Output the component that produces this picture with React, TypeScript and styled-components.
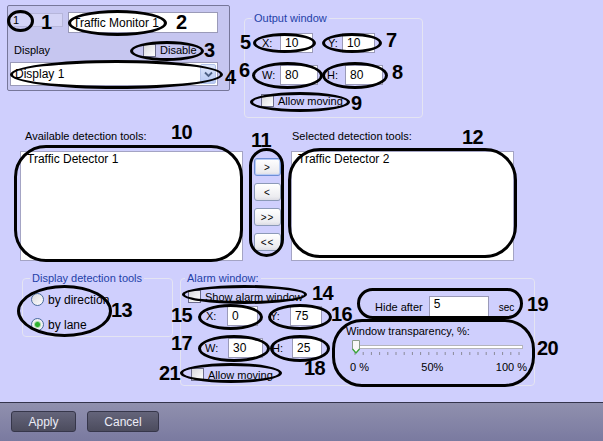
import React from "react";
import styled, { createGlobalStyle } from "styled-components";

const GlobalStyle = createGlobalStyle`
  html, body {
    margin: 0;
    padding: 0;
    background: #cfcffd;
  }
  body {
    font-family: "Liberation Sans", Arial, sans-serif;
    font-size: 11px;
    color: #000;
  }
`;

const Window = styled.div`
  position: relative;
  width: 603px;
  height: 441px;
  overflow: hidden;
  background: #cfcffd;
  display: flex;
  flex-direction: column;
`;

const Content = styled.div`
  height: 402px;
  display: flex;
  flex-direction: column;
`;

const TopRow = styled.div`
  display: flex;
  align-items: flex-start;
  padding-left: 7px;
`;

const ObjectPanel = styled.div`
  box-sizing: border-box;
  width: 223px;
  height: 86px;
  margin-top: 5px;
  padding: 6px 0 0 2px;
  border: 1px solid #77779a;
  border-radius: 2px;
  background: #c6c6f0;
  display: flex;
  flex-direction: column;
`;

const PanelRow = styled.div<{ $mt?: number; $h?: number }>`
  display: flex;
  align-items: center;
  margin-top: ${(p) => p.$mt ?? 0}px;
  height: ${(p) => p.$h ?? 21}px;
`;

const IdBox = styled.div`
  box-sizing: border-box;
  width: 53px;
  height: 14px;
  margin-top: 1px;
  align-self: flex-start;
  padding-left: 2px;
  line-height: 12px;
  border: 1px solid #b6b6da;
  background: #d4d4f6;
`;

const TextBox = styled.div<{ $w: number; $h?: number; $ml?: number }>`
  box-sizing: border-box;
  width: ${(p) => p.$w}px;
  height: ${(p) => p.$h ?? 20}px;
  margin-left: ${(p) => p.$ml ?? 0}px;
  flex: none;
  padding: 0 4px;
  display: flex;
  align-items: center;
  background: #fff;
  border: 1px solid #9a9ab8;
  font-size: 12px;
  white-space: nowrap;
`;

const PlainLabel = styled.span<{ $w?: number }>`
  display: inline-block;
  flex: none;
  width: ${(p) => (p.$w ? `${p.$w}px` : "auto")};
  white-space: nowrap;
  font-size: 11px;
`;

const CheckRow = styled.label<{ $pl?: number; $mt?: number }>`
  display: flex;
  align-items: center;
  gap: 4px;
  height: 13px;
  padding-left: ${(p) => p.$pl ?? 0}px;
  margin-top: ${(p) => p.$mt ?? 0}px;
  font-size: 11px;
  white-space: nowrap;
`;

const CheckBox = styled.span`
  box-sizing: border-box;
  width: 13px;
  height: 13px;
  flex: none;
  border: 1px solid #6c6c8c;
  background: linear-gradient(135deg, #d8d8dc 0%, #f4f4f6 70%, #ffffff 100%);
`;

const Select = styled.div`
  box-sizing: border-box;
  width: 208px;
  height: 24px;
  display: flex;
  align-items: center;
  justify-content: space-between;
  padding-left: 4px;
  background: #fff;
  border: 1px solid #9a9ab8;
  font-size: 12px;
`;

const SelectArrow = styled.span`
  box-sizing: border-box;
  width: 16px;
  height: 20px;
  margin-right: 1px;
  display: flex;
  align-items: center;
  justify-content: center;
  border: 1px solid #b4c4ea;
  border-radius: 2px;
  background: linear-gradient(#dfe8fc, #b6c8f4);
`;

const Group = styled.fieldset<{ $w: number; $h: number; $ml?: number; $mt?: number }>`
  box-sizing: border-box;
  width: ${(p) => p.$w}px;
  height: ${(p) => p.$h}px;
  margin: ${(p) => p.$mt ?? 0}px 0 0 ${(p) => p.$ml ?? 0}px;
  padding: 0;
  min-width: 0;
  border: 1px solid #e4e4f2;
  border-radius: 4px;
`;

const Legend = styled.legend<{ $ml: number }>`
  margin-left: ${(p) => p.$ml}px;
  padding: 0 2px;
  line-height: 12px;
  font-size: 11px;
  color: #1f3fa8;
`;

const FieldRow = styled.div<{ $pl: number; $mt: number }>`
  display: flex;
  align-items: center;
  padding-left: ${(p) => p.$pl}px;
  margin-top: ${(p) => p.$mt}px;
`;

const Lists = styled.div`
  display: grid;
  grid-template-columns: 223px 26px 223px;
  grid-template-rows: 13px 110px;
  column-gap: 11px;
  row-gap: 8px;
  margin-top: 12px;
  padding-left: 20px;
`;

const ListCaption = styled.div<{ $pl: number }>`
  padding-left: ${(p) => p.$pl}px;
  line-height: 13px;
  font-size: 11px;
  white-space: nowrap;
`;

const ListBox = styled.div`
  box-sizing: border-box;
  background: #fff;
  border: 1px solid #a4a4c4;
  padding: 0 6px;
  font-size: 12px;
  line-height: 14px;
`;

const MoveButtons = styled.div`
  display: flex;
  flex-direction: column;
  gap: 7px;
  padding-top: 7px;
`;

const MoveButton = styled.div<{ $focus?: boolean }>`
  box-sizing: border-box;
  width: 27px;
  height: 18px;
  display: flex;
  align-items: center;
  justify-content: center;
  border: 1px solid ${(p) => (p.$focus ? "#6e8ed6" : "#8c9ab8")};
  border-radius: 3px;
  background: linear-gradient(#ffffff, #ececf0 80%, #dcdce4);
  box-shadow: ${(p) => (p.$focus ? "inset 0 0 0 1px #b8ccf4" : "none")};
  font-size: 10px;
  letter-spacing: 1px;
`;

const BottomRow = styled.div`
  display: flex;
  align-items: flex-start;
  margin-top: 11px;
  padding-left: 22px;
  gap: 7px;
`;

const RadioRow = styled.label<{ $mt: number }>`
  display: flex;
  align-items: center;
  gap: 4px;
  height: 13px;
  margin-top: ${(p) => p.$mt}px;
  padding-left: 8px;
  font-size: 12px;
  white-space: nowrap;
`;

const Radio = styled.span<{ $checked?: boolean }>`
  box-sizing: border-box;
  width: 13px;
  height: 13px;
  flex: none;
  border-radius: 50%;
  border: 1px solid #4a6c9c;
  background: ${(p) =>
    p.$checked
      ? "radial-gradient(circle, #2fb02f 0, #2fb02f 2px, #a8dca8 3px, #f0f0f2 4px)"
      : "linear-gradient(135deg, #d8d8dc, #ffffff)"};
`;

const AlarmBody = styled.div`
  display: flex;
`;

const AlarmLeft = styled.div`
  width: 154px;
  display: flex;
  flex-direction: column;
  padding-top: 6px;
`;

const AlarmRight = styled.div`
  flex: 1;
  display: flex;
  flex-direction: column;
`;

const HideRow = styled.div`
  display: flex;
  align-items: center;
  margin-top: 12px;
  padding-left: 40px;
  gap: 6px;
  font-size: 11px;
`;

const Caption = styled.div<{ $pl: number; $mt: number }>`
  padding-left: ${(p) => p.$pl}px;
  margin-top: ${(p) => p.$mt}px;
  line-height: 13px;
  font-size: 11px;
  white-space: nowrap;
`;

const SliderWrap = styled.div`
  margin: 2px 0 0 16px;
  height: 16px;
`;

const ScaleRow = styled.div`
  display: flex;
  justify-content: space-between;
  width: 177px;
  margin: 5px 0 0 15px;
  font-size: 11px;
  line-height: 13px;
`;

const Footer = styled.div`
  box-sizing: border-box;
  height: 39px;
  border-top: 1px solid #34344c;
  background: linear-gradient(#9090ae, #7a7aa0);
  display: flex;
  align-items: flex-start;
  gap: 11px;
  padding: 8px 0 0 11px;
`;

const FooterButton = styled.div<{ $w: number }>`
  box-sizing: border-box;
  width: ${(p) => p.$w}px;
  height: 21px;
  display: flex;
  align-items: center;
  justify-content: center;
  border: 1px solid #36364a;
  border-radius: 3px;
  background: linear-gradient(#64647a, #4c4c5e);
  color: #ececf6;
  font-size: 12px;
`;

const Overlay = styled.div`
  position: absolute;
  inset: 0;
  pointer-events: none;
`;

const Ring = styled.div<{ $x: number; $y: number; $w: number; $h: number; $r?: number }>`
  position: absolute;
  box-sizing: border-box;
  left: ${(p) => p.$x}px;
  top: ${(p) => p.$y}px;
  width: ${(p) => p.$w}px;
  height: ${(p) => p.$h}px;
  border: 3px solid #000;
  border-radius: ${(p) => (p.$r ? `${p.$r}px` : "50%")};
`;

const Callout = styled.div<{ $x: number; $y: number }>`
  position: absolute;
  left: ${(p) => p.$x - 1}px;
  top: ${(p) => p.$y - 3}px;
  font-family: "Liberation Sans", Arial, sans-serif;
  font-weight: bold;
  font-size: 20px;
  line-height: 20px;
  letter-spacing: -0.5px;
  color: #000;
`;

const rings = [
  { x: 7, y: 10, w: 27, h: 22 },
  { x: 68, y: 10, w: 99, h: 26 },
  { x: 130, y: 41, w: 74, h: 20 },
  { x: 10, y: 60, w: 213, h: 29 },
  { x: 253, y: 33, w: 63, h: 20 },
  { x: 322, y: 33, w: 60, h: 20 },
  { x: 252, y: 62, w: 71, h: 27 },
  { x: 322, y: 62, w: 66, h: 27 },
  { x: 250, y: 92, w: 100, h: 20 },
  { x: 14, y: 145, w: 229, h: 117, r: 32 },
  { x: 249, y: 148, w: 35, h: 109, r: 18 },
  { x: 288, y: 148, w: 229, h: 110, r: 32 },
  { x: 17, y: 285, w: 95, h: 52 },
  { x: 182, y: 285, w: 125, h: 19 },
  { x: 198, y: 304, w: 65, h: 26 },
  { x: 268, y: 304, w: 64, h: 26 },
  { x: 198, y: 335, w: 72, h: 27 },
  { x: 270, y: 335, w: 60, h: 27 },
  { x: 180, y: 363, w: 102, h: 20 },
  { x: 357, y: 288, w: 166, h: 31, r: 16 },
  { x: 332, y: 319, w: 203, h: 68, r: 30 },
];

const callouts = [
  { n: "1", x: 42, y: 15 },
  { n: "2", x: 177, y: 15 },
  { n: "3", x: 205, y: 43 },
  { n: "4", x: 226, y: 70 },
  { n: "5", x: 241, y: 35 },
  { n: "6", x: 240, y: 63 },
  { n: "7", x: 387, y: 33 },
  { n: "8", x: 393, y: 65 },
  { n: "9", x: 352, y: 96 },
  { n: "10", x: 172, y: 125 },
  { n: "11", x: 252, y: 133 },
  { n: "12", x: 463, y: 130 },
  { n: "13", x: 112, y: 303 },
  { n: "14", x: 313, y: 286 },
  { n: "15", x: 172, y: 308 },
  { n: "16", x: 332, y: 307 },
  { n: "17", x: 172, y: 336 },
  { n: "18", x: 305, y: 361 },
  { n: "19", x: 528, y: 297 },
  { n: "20", x: 538, y: 341 },
  { n: "21", x: 160, y: 366 },
];

const ticks = Array.from({ length: 21 }, (_, i) => 4 + i * 8.2);

const Slider = () => (
  <svg width="174" height="16" viewBox="0 0 174 16">
    <rect x="1.5" y="5.5" width="170" height="3" fill="#fff" stroke="#b4b4bc" />
    {ticks.map((t) => (
      <line key={t} x1={t} x2={t} y1="12" y2="15" stroke="#8a8a98" strokeWidth="1" />
    ))}
    <path d="M1.5 0.5 H8.5 V9 L5 13 L1.5 9 Z" fill="#f8f8f8" stroke="#8a9a8a" />
    <path d="M1.5 9 L5 13 L8.5 9" fill="none" stroke="#3aa63a" strokeWidth="1.2" />
  </svg>
);

const ChevronDown = () => (
  <svg width="9" height="7" viewBox="0 0 9 7">
    <path d="M1 1.5 L4.5 5 L8 1.5" fill="none" stroke="#4d6185" strokeWidth="1.8" />
  </svg>
);

const App = () => {
  return (
    <Window>
      <GlobalStyle />
      <Content>
        <TopRow>
          <ObjectPanel>
            <PanelRow>
              <IdBox>1</IdBox>
              <TextBox $w={150} $h={21} $ml={5}>
                Traffic Monitor 1
              </TextBox>
            </PanelRow>
            <PanelRow $mt={8} $h={18}>
              <PlainLabel $w={133} style={{ paddingLeft: 4, boxSizing: "border-box" }}>
                Display
              </PlainLabel>
              <CheckRow>
                <CheckBox />
                Disable
              </CheckRow>
            </PanelRow>
            <PanelRow $mt={3} $h={24}>
              <Select>
                Display 1
                <SelectArrow>
                  <ChevronDown />
                </SelectArrow>
              </Select>
            </PanelRow>
          </ObjectPanel>

          <Group $w={179} $h={106} $ml={14} $mt={12}>
            <Legend $ml={7}>Output window</Legend>
            <FieldRow $pl={17} $mt={9}>
              <PlainLabel $w={18}>X:</PlainLabel>
              <TextBox $w={33}>10</TextBox>
              <PlainLabel $w={14} style={{ marginLeft: 15 }}>
                Y:
              </PlainLabel>
              <TextBox $w={33}>10</TextBox>
            </FieldRow>
            <FieldRow $pl={17} $mt={12}>
              <PlainLabel $w={18}>W:</PlainLabel>
              <TextBox $w={38}>80</TextBox>
              <PlainLabel $w={18} style={{ marginLeft: 9 }}>
                H:
              </PlainLabel>
              <TextBox $w={38}>80</TextBox>
            </FieldRow>
            <CheckRow $pl={16} $mt={9}>
              <CheckBox />
              Allow moving
            </CheckRow>
          </Group>
        </TopRow>

        <Lists>
          <ListCaption $pl={5}>Available detection tools:</ListCaption>
          <div />
          <ListCaption $pl={1}>Selected detection tools:</ListCaption>
          <ListBox>Traffic Detector 1</ListBox>
          <MoveButtons>
            <MoveButton $focus>&gt;</MoveButton>
            <MoveButton>&lt;</MoveButton>
            <MoveButton>&gt;&gt;</MoveButton>
            <MoveButton>&lt;&lt;</MoveButton>
          </MoveButtons>
          <ListBox>Traffic Detector 2</ListBox>
        </Lists>

        <BottomRow>
          <Group $w={151} $h={65}>
            <Legend $ml={7}>Display detection tools</Legend>
            <RadioRow $mt={9}>
              <Radio />
              by direction
            </RadioRow>
            <RadioRow $mt={12}>
              <Radio $checked />
              by lane
            </RadioRow>
          </Group>

          <Group $w={355} $h={114}>
            <Legend $ml={4}>Alarm window:</Legend>
            <AlarmBody>
              <AlarmLeft>
                <CheckRow $pl={7}>
                  <CheckBox />
                  Show alarm window
                </CheckRow>
                <FieldRow $pl={25} $mt={3}>
                  <PlainLabel $w={21}>X:</PlainLabel>
                  <TextBox $w={31}>0</TextBox>
                  <PlainLabel $w={20} style={{ marginLeft: 12 }}>
                    Y:
                  </PlainLabel>
                  <TextBox $w={32}>75</TextBox>
                </FieldRow>
                <FieldRow $pl={24} $mt={12}>
                  <PlainLabel $w={23}>W:</PlainLabel>
                  <TextBox $w={35}>30</TextBox>
                  <PlainLabel $w={20} style={{ marginLeft: 9 }}>
                    H:
                  </PlainLabel>
                  <TextBox $w={30}>25</TextBox>
                </FieldRow>
                <CheckRow $pl={10} $mt={10}>
                  <CheckBox />
                  Allow moving
                </CheckRow>
              </AlarmLeft>
              <AlarmRight>
                <HideRow>
                  <PlainLabel>Hide after</PlainLabel>
                  <TextBox $w={60} $h={22} style={{ alignItems: "flex-start" }}>
                    5
                  </TextBox>
                  <PlainLabel style={{ marginLeft: 4, fontSize: 10 }}>sec</PlainLabel>
                </HideRow>
                <Caption $pl={11} $mt={7}>
                  Window transparency, %:
                </Caption>
                <SliderWrap>
                  <Slider />
                </SliderWrap>
                <ScaleRow>
                  <span>0 %</span>
                  <span>50%</span>
                  <span>100 %</span>
                </ScaleRow>
              </AlarmRight>
            </AlarmBody>
          </Group>
        </BottomRow>
      </Content>

      <Footer>
        <FooterButton $w={65}>Apply</FooterButton>
        <FooterButton $w={72}>Cancel</FooterButton>
      </Footer>

      <Overlay>
        {rings.map((r, i) => (
          <Ring key={i} $x={r.x} $y={r.y} $w={r.w} $h={r.h} $r={r.r} />
        ))}
        {callouts.map((c) => (
          <Callout key={c.n} $x={c.x} $y={c.y}>
            {c.n}
          </Callout>
        ))}
      </Overlay>
    </Window>
  );
};

export default App;
